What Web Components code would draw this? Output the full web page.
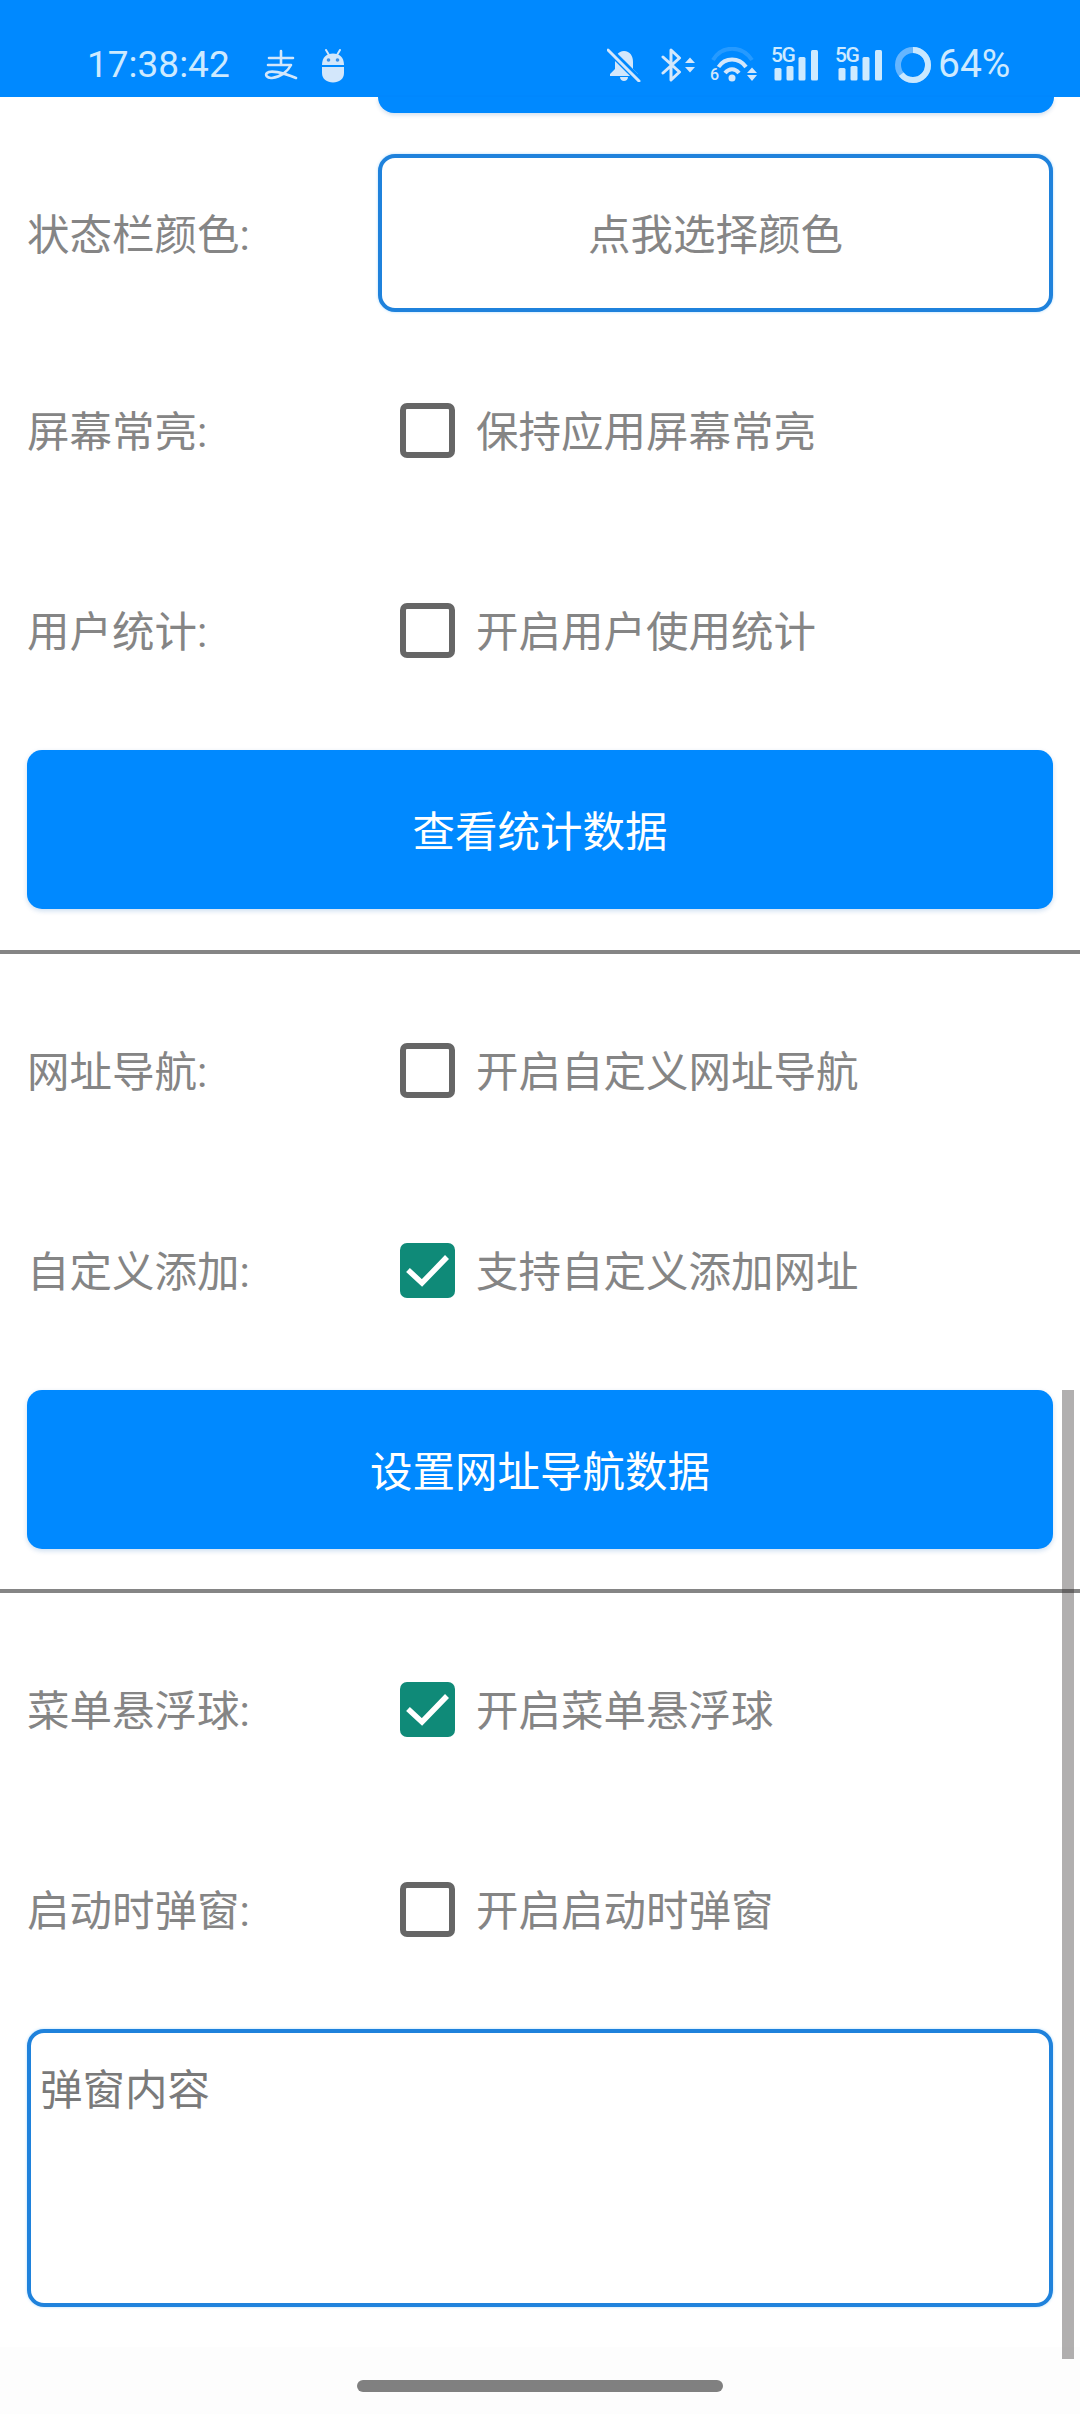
<!DOCTYPE html>
<html lang="zh-CN">
<head>
<meta charset="utf-8">
<title>设置</title>
<style>
  html,body{margin:0;padding:0;background:#fff}
  body{width:1080px;height:2414px;overflow:hidden;position:relative;font-family:Roboto,"Noto Sans CJK SC",sans-serif;color:#858585;font-size:42.5px}
  settings-page{display:block}
</style>
</head>
<body>
<settings-page>
  <status-bar></status-bar>
  <button-tail></button-tail>
  <form-row label="状态栏颜色:" style="--label-w:351px;--row-h:158px;--mt:41px"><color-box>点我选择颜色</color-box></form-row>
  <form-row label="屏幕常亮:" style="--mt:68px"><check-box>保持应用屏幕常亮</check-box></form-row>
  <form-row label="用户统计:" style="--mt:100px"><check-box>开启用户使用统计</check-box></form-row>
  <action-button style="--mt:70px">查看统计数据</action-button>
  <row-divider style="--mt:41px"></row-divider>
  <form-row label="网址导航:" style="--mt:66px"><check-box>开启自定义网址导航</check-box></form-row>
  <form-row label="自定义添加:" style="--mt:100px"><check-box checked>支持自定义添加网址</check-box></form-row>
  <action-button style="--mt:70px">设置网址导航数据</action-button>
  <row-divider style="--mt:40px"></row-divider>
  <form-row label="菜单悬浮球:" style="--mt:66px"><check-box checked>开启菜单悬浮球</check-box></form-row>
  <form-row label="启动时弹窗:" style="--mt:100px"><check-box>开启启动时弹窗</check-box></form-row>
  <text-box>弹窗内容</text-box>
  <nav-handle></nav-handle>
  <scroll-thumb></scroll-thumb>
</settings-page>
<script>
const ICON = '#d3e7fb';
function shell(el, html){ el.attachShadow({mode:'open'}).innerHTML = html; }
const signal = `<span class="sig"><span class="g5">5G</span><svg width="47" height="36" viewBox="0 0 47 36">
  <rect x="3.500" y="22" width="7" height="12.500" rx="1.500" fill="#cdeaff"/>
  <rect x="15.500" y="20" width="7" height="14.500" rx="1.500" fill="#cdeaff"/>
  <rect x="27.500" y="11" width="7" height="23.500" rx="1.500" fill="#cdeaff"/>
  <rect x="40" y="4" width="7" height="30.500" rx="1.500" fill="#cdeaff"/>
</svg></span>`;
class StatusBar extends HTMLElement{ constructor(){ super(); shell(this,`
<style>
  :host{display:flex;align-items:flex-start;height:97px;background:#0089ff;color:#cdeaff;font-family:Roboto,sans-serif;box-sizing:border-box;padding:46px 69px 0 87px}
  .time{font-size:37px;line-height:37px;width:177px;white-space:nowrap}
  svg{display:block;flex:none}
  .alipay{margin-right:23px;margin-top:3px}
  .right{margin-left:auto;display:flex;align-items:flex-start}
  .pct{font-size:39px;line-height:37px;margin-left:7px;white-space:nowrap;width:73px}
  .sig,.wifi{position:relative;display:block;flex:none}
  .g5{position:absolute;left:0;top:-1px;font-size:21px;line-height:20px;font-weight:500;color:#cdeaff;letter-spacing:-1.5px;white-space:nowrap}
  .six{position:absolute;left:0;top:20px;font-size:16px;line-height:16px;font-weight:500;color:${ICON}}
</style>
<span class="time">17:38:42</span>
<svg class="alipay" width="34" height="32" viewBox="0 0 34 32" fill="none" stroke="${ICON}" stroke-width="2.600" stroke-linecap="round" stroke-linejoin="round">
  <path d="M5 9H29M17 2V15M4 16H27C24 22 17 28 8 29C3 29.500 1 26 3 24C6 21 18 23 32 29"/>
</svg>
<svg width="24" height="34" viewBox="0 0 24 34" style="margin-top:3px">
  <path d="M5 1L8 6M19 1L16 6" stroke="${ICON}" stroke-width="2" stroke-linecap="round"/>
  <path d="M1 16C1 8 6 4.500 12 4.500S23 8 23 16Z" fill="${ICON}"/>
  <path d="M1 18H23V24C23 30 18 33.500 12 33.500S1 30 1 24Z" fill="${ICON}"/>
  <circle cx="7.500" cy="11" r="1.800" fill="#3a90e8"/><circle cx="16.500" cy="11" r="1.800" fill="#3a90e8"/>
</svg>
<div class="right">
  <svg width="34" height="34" viewBox="0 0 34 34" style="margin-top:2px">
    <path d="M17 3C11 3 8 8 8 14V21L3 26V28H31V26L26 21V14C26 8 23 3 17 3ZM13 29C13 31.500 15 33 17 33S21 31.500 21 29Z" fill="${ICON}"/>
    <path d="M1 1L33 33" stroke="#0089ff" stroke-width="7"/>
    <path d="M1 2L32 33" stroke="${ICON}" stroke-width="3" stroke-linecap="round"/>
  </svg>
  <svg width="35" height="34" viewBox="0 0 35 34" style="margin-left:20px;margin-top:2px" fill="none">
    <path d="M2 9L18.500 24L10 32V2L18.500 10L2 25" stroke="${ICON}" stroke-width="3" stroke-linejoin="round" stroke-linecap="round"/>
    <path d="M24 15L29 9.500L34 15ZM24 19H34L29 24.500Z" fill="${ICON}"/>
  </svg>
  <span class="wifi" style="margin-left:14px;margin-top:1px"><span class="six">6</span><svg width="47" height="36" viewBox="0 0 47 36" fill="none">
    <path d="M3 13C12 -2 32 -2 42 13" stroke="#fff" stroke-opacity=".15" stroke-width="4"/>
    <path d="M8.500 20C15 10 29 10 36 20" stroke="${ICON}" stroke-width="4"/>
    <path d="M15 26C19 21 25 21 29 26" stroke="${ICON}" stroke-width="4"/>
    <circle cx="22" cy="31" r="3.500" fill="${ICON}"/>
    <path d="M37 26L42 20.500L47 26ZM37 28H47L42 34Z" fill="${ICON}"/>
  </svg></span>
  <span style="margin-left:14px;display:block">${signal}</span>
  <span style="margin-left:17px;display:block">${signal}</span>
  <svg width="36" height="36" viewBox="0 0 36 36" style="margin-left:13px;margin-top:1px" fill="none">
    <circle cx="18" cy="18" r="15" stroke="#66b6ff" stroke-width="6"/>
    <circle cx="18" cy="18" r="15" stroke="#c9e8ff" stroke-width="6" stroke-dasharray="60.300 94.300" transform="rotate(-90 18 18)"/>
  </svg>
  <span class="pct">64%</span>
</div>`);} }
class ButtonTail extends HTMLElement{ constructor(){ super(); shell(this,`
<style>:host{display:block;height:16px;margin:0 26px 0 378px;background:#0089ff;border-radius:0 0 16px 16px;box-shadow:0 2px 4px rgba(0,80,160,.18)}</style>`);} }
class FormRow extends HTMLElement{ static get observedAttributes(){return ['label']}
  constructor(){ super(); shell(this,`
<style>
  :host{display:flex;align-items:center;height:var(--row-h,100px);margin-top:var(--mt,0);padding:0 27px;color:#858585}
  .l{flex:none;width:var(--label-w,373px);font-size:42.500px;line-height:50px;padding-top:6px;white-space:nowrap}
  .c{flex:1;min-width:0;display:flex;align-items:center;height:100%}
</style>
<span class="l"></span><div class="c"><slot></slot></div>`);
    this.shadowRoot.querySelector('.l').textContent=this.getAttribute('label')||''; }
  attributeChangedCallback(n,o,v){ this.shadowRoot.querySelector('.l').textContent=v; } }
class ColorBox extends HTMLElement{ constructor(){ super(); shell(this,`
<style>:host{display:flex;flex:1;height:100%;box-sizing:border-box;align-items:center;justify-content:center;padding-top:6px;border:4px solid #1f82dc;border-radius:17px;background:#fff;color:#858585;font-size:42.500px;line-height:50px;box-shadow:0 0 3px rgba(60,170,255,.4)}</style><slot></slot>`);} }
class CheckBox extends HTMLElement{ constructor(){ super(); const on=this.hasAttribute('checked'); shell(this,`
<style>
  :host{display:flex;align-items:center;color:#858585;font-size:42.500px;line-height:50px;white-space:nowrap}
  svg{display:block;flex:none;margin-right:21px}
  .t{display:block;padding-top:6px}
</style>
${on?`<svg width="55" height="55" viewBox="0 0 55 55"><rect width="55" height="55" rx="7" fill="#0f8a78"/><path d="M8 27L22 40L47 14" fill="none" stroke="#fff" stroke-width="5.500"/></svg>`
    :`<svg width="55" height="55" viewBox="0 0 55 55"><rect x="3" y="3" width="49" height="49" rx="4" fill="#fff" stroke="#666" stroke-width="6"/></svg>`}
<span class="t"><slot></slot></span>`);} }
class ActionButton extends HTMLElement{ constructor(){ super(); shell(this,`
<style>:host{display:flex;align-items:center;justify-content:center;box-sizing:border-box;height:159px;padding-top:6px;margin:var(--mt,70px) 27px 0;background:#0089ff;color:#fff;border-radius:15px;font-size:42.500px;line-height:50px;box-shadow:0 2px 5px rgba(0,90,180,.2)}</style><slot></slot>`);} }
class RowDivider extends HTMLElement{ constructor(){ super(); shell(this,`
<style>:host{display:block;height:4px;margin-top:var(--mt,41px);background:#858585}</style>`);} }
class TextBox extends HTMLElement{ constructor(){ super(); shell(this,`
<style>:host{display:block;box-sizing:border-box;height:278px;margin:70px 27px 0;border:4px solid #1f82dc;border-radius:17px;padding:33px 9px 0;color:#7a7a7a;font-size:42.500px;line-height:50px;box-shadow:0 0 3px rgba(60,170,255,.4)}</style><slot></slot>`);} }
class NavHandle extends HTMLElement{ constructor(){ super(); shell(this,`
<style>
  :host{display:block;position:absolute;left:0;right:0;top:2347px;height:67px;background:#fdfdfd}
  div{width:366px;height:12px;margin:33px auto 0;background:#808080;border-radius:6px}
</style><div></div>`);} }
class ScrollThumb extends HTMLElement{ constructor(){ super(); shell(this,`
<style>:host{display:block;position:absolute;left:1062px;top:1390px;width:12px;height:969px;background:rgba(50,45,45,.38)}</style>`);} }
class SettingsPage extends HTMLElement{ constructor(){ super(); shell(this,`
<style>:host{display:block;width:1080px;height:2414px}</style><slot></slot>`);} }
customElements.define('status-bar',StatusBar);
customElements.define('button-tail',ButtonTail);
customElements.define('form-row',FormRow);
customElements.define('color-box',ColorBox);
customElements.define('check-box',CheckBox);
customElements.define('action-button',ActionButton);
customElements.define('row-divider',RowDivider);
customElements.define('text-box',TextBox);
customElements.define('nav-handle',NavHandle);
customElements.define('scroll-thumb',ScrollThumb);
customElements.define('settings-page',SettingsPage);
</script>
</body>
</html>
